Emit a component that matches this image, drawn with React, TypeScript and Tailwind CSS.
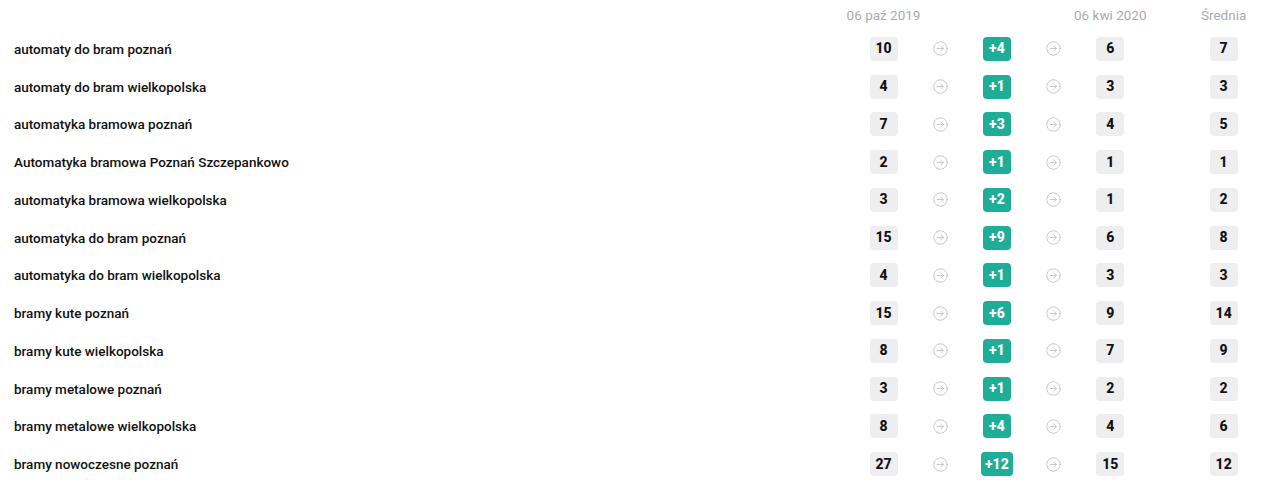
import React from 'react';

interface Row {
  name: string;
  from: number;
  diff: number;
  to: number;
  avg: number;
}

const rows: Row[] = [
  { name: 'automaty do bram poznań', from: 10, diff: 4, to: 6, avg: 7 },
  { name: 'automaty do bram wielkopolska', from: 4, diff: 1, to: 3, avg: 3 },
  { name: 'automatyka bramowa poznań', from: 7, diff: 3, to: 4, avg: 5 },
  { name: 'Automatyka bramowa Poznań Szczepankowo', from: 2, diff: 1, to: 1, avg: 1 },
  { name: 'automatyka bramowa wielkopolska', from: 3, diff: 2, to: 1, avg: 2 },
  { name: 'automatyka do bram poznań', from: 15, diff: 9, to: 6, avg: 8 },
  { name: 'automatyka do bram wielkopolska', from: 4, diff: 1, to: 3, avg: 3 },
  { name: 'bramy kute poznań', from: 15, diff: 6, to: 9, avg: 14 },
  { name: 'bramy kute wielkopolska', from: 8, diff: 1, to: 7, avg: 9 },
  { name: 'bramy metalowe poznań', from: 3, diff: 1, to: 2, avg: 2 },
  { name: 'bramy metalowe wielkopolska', from: 8, diff: 4, to: 4, avg: 6 },
  { name: 'bramy nowoczesne poznań', from: 27, diff: 12, to: 15, avg: 12 },
];

function ArrowCircle() {
  return (
    <svg width="15" height="15" viewBox="0 0 16 16" fill="none" stroke="#c4c4c4" strokeWidth="1" strokeLinecap="round" strokeLinejoin="round">
      <circle cx="8" cy="8" r="7.2" />
      <path d="M4.5 8h6.5M8.3 5.2 11 8l-2.7 2.8" />
    </svg>
  );
}

function Badge({ children, green }: { children: React.ReactNode; green?: boolean }) {
  return (
    <span
      className={`flex h-6 min-w-7 items-center justify-center rounded px-1 text-[14px] font-extrabold ${
        green ? 'bg-[#1eae98] text-white' : 'bg-[#eeeef0] text-[#111]'
      }`}
    >
      {children}
    </span>
  );
}

const cell = 'flex w-[56.7px] shrink-0 items-center justify-center';

export default function App() {
  return (
    <div className="w-[1268px] bg-white pl-[14px] pr-[16px] font-['Roboto',sans-serif]">
      <div className="flex h-[30px] items-center text-[13.5px] text-[#ababab]">
        <div className="flex-1" />
        <div className={cell}><span className="whitespace-nowrap">06 paź 2019</span></div>
        <div className={cell} />
        <div className={cell} />
        <div className={cell} />
        <div className={cell}><span className="whitespace-nowrap">06 kwi 2020</span></div>
        <div className={cell} />
        <div className={cell}><span className="whitespace-nowrap">Średnia</span></div>
      </div>
      {rows.map((r) => (
        <div key={r.name} className="flex h-[37.75px] items-center">
          <div className="flex-1 text-[13.5px] font-medium text-[#111]">{r.name}</div>
          <div className={cell}><Badge>{r.from}</Badge></div>
          <div className={cell}><ArrowCircle /></div>
          <div className={cell}><Badge green>+{r.diff}</Badge></div>
          <div className={cell}><ArrowCircle /></div>
          <div className={cell}><Badge>{r.to}</Badge></div>
          <div className={cell} />
          <div className={cell}><Badge>{r.avg}</Badge></div>
        </div>
      ))}
    </div>
  );
}
